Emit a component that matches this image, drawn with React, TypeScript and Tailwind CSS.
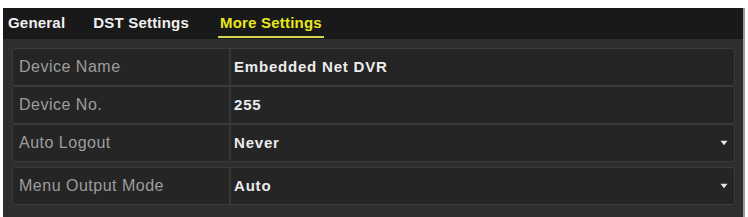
import React from 'react';

const Chevron = () => (
  <svg className="h-[6px] w-[8px]" viewBox="0 0 8 6" fill="#e6e6e6">
    <path d="M0.5 0.8 L7.5 0.8 L4 5.2 Z" />
  </svg>
);

interface RowProps {
  label: string;
  value: string;
  select?: boolean;
}

const Row: React.FC<RowProps> = ({ label, value, select }) => (
  <div className="flex h-[38px] rounded-[3px] border border-[#3b3b3b] bg-[#252525]">
    <div className="flex w-[218px] items-center border-r-2 border-[#363636] pl-[6px] text-[16px] tracking-[0.5px] text-[#9d9d9d]">
      {label}
    </div>
    <div className="flex flex-1 items-center justify-between pl-[3px] pr-[6px] text-[15px] font-bold tracking-[0.8px] text-[#ececec]">
      <span>{value}</span>
      {select && <Chevron />}
    </div>
  </div>
);

export default function App() {
  return (
    <div className="h-[217px] w-[748px] bg-white pl-[3px] pr-[3px] pt-[8px] font-['Liberation_Sans',Arial,sans-serif]">
      <div className="flex h-[209px] flex-col border-r-2 border-[#9a9a9a] bg-[#2e2e2e]">
        <div className="flex h-[31px] items-center bg-[#191919] pl-[5px] text-[15px] font-bold tracking-[0.2px]">
          <div className="flex h-full items-center text-[#f0f0f0]">General</div>
          <div className="ml-[28px] flex h-full items-center text-[#f0f0f0]">DST Settings</div>
          <div className="relative ml-[29px] flex h-full items-center px-[2px] text-[#e8e81c]">
            More Settings
            <div className="absolute bottom-[1px] left-0 right-0 h-[2px] bg-[#d5d54a]" />
          </div>
        </div>
        <div className="flex flex-col pl-[9px] pr-[8px] pt-[9px]">
          <Row label="Device Name" value="Embedded Net DVR" />
          <Row label="Device No." value="255" />
          <Row label="Auto Logout" value="Never" select />
          <div className="mt-[5px]">
            <Row label="Menu Output Mode" value="Auto" select />
          </div>
        </div>
      </div>
    </div>
  );
}
